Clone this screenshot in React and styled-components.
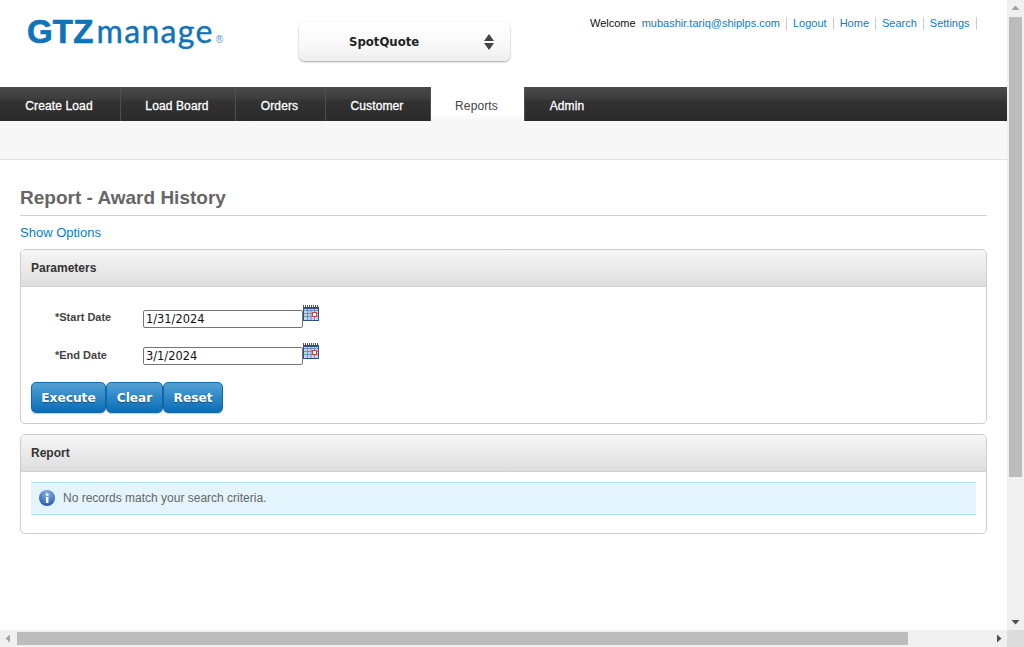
import React from "react";
import styled, { createGlobalStyle } from "styled-components";

const Global = createGlobalStyle`
  html, body { margin: 0; padding: 0; height: 100%; overflow: hidden; background: #fff; }
  * { box-sizing: border-box; }
  body { font-family: "Liberation Sans", Arial, sans-serif; }
`;

const Frame = styled.div`
  display: grid;
  grid-template-columns: 1007px 17px;
  grid-template-rows: 630px 17px;
  width: 1024px;
  height: 647px;
`;
const Viewport = styled.div`
  overflow: hidden;
  background: #fff;
`;
const Header = styled.header`
  display: flex;
  height: 87px;
`;
const Logo = styled.div`
  display: flex;
  align-items: baseline;
  width: 299px;
  height: 87px;
  padding: 10px 0 0 27px;
  color: #0f73ba;
  white-space: nowrap;
`;
const LogoMark = styled.span`
  font-size: 33px;
  font-weight: 700;
  font-family: "Liberation Sans", Arial, sans-serif;
  -webkit-text-stroke: 0.7px #0f73ba;
  letter-spacing: 0.2px;
  line-height: 42px;
`;
const LogoWord = styled.span`
  margin-left: 3px;
  font-size: 32px;
  font-family: "Lato", sans-serif;
  font-weight: 400;
  -webkit-text-stroke: 0.4px #0f73ba;
  letter-spacing: 1.3px;
  line-height: 42px;
`;
const LogoReg = styled.span`
  margin-left: 2px;
  font-size: 10px;
  opacity: 0.75;
`;
const ModuleSelect = styled.div`
  display: flex;
  align-items: center;
  justify-content: space-between;
  width: 211px;
  height: 39px;
  margin-top: 22px;
  padding: 0 16px 0 50px;
  border-radius: 6px;
  background: linear-gradient(#ffffff, #f8f8f8 60%, #eeeeee);
  box-shadow: 0 1px 2px rgba(0, 0, 0, 0.35), 0 0 1px rgba(0, 0, 0, 0.12);
  font-family: "DejaVu Sans", Verdana, sans-serif;
  font-weight: 700;
  color: #222;
`;
const ModuleName = styled.span`
  margin-top: 1px;
  font-size: 11.7px;
`;
const UserBar = styled.div`
  display: flex;
  align-items: center;
  height: 14px;
  margin: 16px 0 0 80px;
  font-size: 11px;
  white-space: nowrap;
`;
const Welcome = styled.span`
  margin-right: 6px;
  color: #111;
`;
const TopLink = styled.a`
  display: block;
  height: 13px;
  line-height: 13px;
  padding: 0 6px;
  border-right: 1px solid #ccc;
  color: #0a7dca;
  &:first-of-type { padding-left: 0; }
`;
const Nav = styled.nav`
  display: flex;
  height: 34px;
  background: linear-gradient(#4a4a4a, #3c3c3c 35%, #333333 40%, #2a2a2a);
`;
const Tab = styled.div`
  display: flex;
  align-items: center;
  justify-content: center;
  width: ${(p) => p.$w}px;
  padding: 4px 2px 0 0;
  border-right: 1px solid #4f4f4f;
  font-size: 12px;
  letter-spacing: 0.12px;
  -webkit-text-stroke: ${(p) => (p.$active ? "0" : "0.3px #fff")};
  color: ${(p) => (p.$active ? "#444" : "#fff")};
  background: ${(p) => (p.$active ? "linear-gradient(#ffffff, #ffffff 75%, #f6f6f6)" : "none")};
  &:last-child { border-right: 0; }
`;
const SubBar = styled.div`
  height: 39px;
  background: #f7f7f7;
  border-bottom: 1px solid #e3e3e3;
`;
const Content = styled.main`
  padding: 0 20px;
  width: 1007px;
`;
const Title = styled.h1`
  margin: 0;
  height: 56px;
  padding-top: 26px;
  border-bottom: 1px solid #cfcfcf;
  font-size: 19px;
  line-height: 24px;
  font-weight: 700;
  color: #666;
`;
const OptionsLink = styled.a`
  display: block;
  height: 33px;
  padding-top: 9px;
  font-size: 13px;
  line-height: 16px;
  color: #0a7dca;
`;
const Panel = styled.section`
  border: 1px solid #cccccc;
  border-radius: 5px;
  overflow: hidden;
  margin-bottom: 10px;
`;
const PanelHead = styled.div`
  height: 37px;
  padding: 0 10px;
  display: flex;
  align-items: center;
  background: linear-gradient(#f6f6f6, #dedede);
  border-bottom: 1px solid #d0d0d0;
  font-size: 12px;
  font-weight: 700;
  color: #333;
`;
const ParamBody = styled.div`
  height: 136px;
  padding: 17px 10px 0;
`;
const FieldRow = styled.div`
  display: flex;
  height: 38px;
  padding-left: 24px;
`;
const FieldLabel = styled.label`
  width: 88px;
  padding-top: 7px;
  font-size: 11px;
  line-height: 13px;
  font-weight: 700;
  color: #444;
`;
const DateInput = styled.div`
  width: 160px;
  height: 18px;
  margin-top: ${(p) => p.$mt}px;
  padding: 1px 2px 0;
  border: 1px solid #767676;
  border-radius: 2px;
  background: #fff;
  font-family: "DejaVu Sans", Verdana, sans-serif;
  font-size: 11.4px;
  line-height: 15px;
  color: #111;
`;
const CalendarIcon = styled.svg`
  display: block;
  width: 16px;
  height: 16px;
  margin-top: 1px;
`;
const Buttons = styled.div`
  display: flex;
  margin-top: 2px;
`;
const Button = styled.div`
  display: flex;
  align-items: center;
  justify-content: center;
  width: ${(p) => p.$w}px;
  height: 31px;
  border: 1px solid #1269a8;
  border-radius: 5px;
  background: linear-gradient(#55a1d3, #2f8ac7 45%, #0b6db7);
  box-shadow: 0 1px 1px rgba(0, 0, 0, 0.2);
  color: #fff;
  font-family: "DejaVu Sans", Verdana, sans-serif;
  font-size: 12.2px;
  font-weight: 700;
  text-shadow: 0 1px 1px rgba(0, 0, 0, 0.35);
`;
const ReportBody = styled.div`
  height: 61px;
  padding: 10px 10px 0;
`;
const Alert = styled.div`
  display: flex;
  align-items: center;
  gap: 8px;
  height: 33px;
  padding: 0 0 1px 8px;
  background: #e4f4fd;
  border-top: 1px solid #b8def0;
  border-bottom: 1px solid #b8def0;
  font-size: 12px;
  color: #666;
`;
const InfoIcon = styled.svg`
  display: block;
  width: 16px;
  height: 16px;
  flex: none;
`;
const VTrack = styled.div`
  display: flex;
  flex-direction: column;
  align-items: center;
  background: #f0f0f0;
`;
const HTrack = styled.div`
  display: flex;
  align-items: center;
  background: #f0f0f0;
`;
const Corner = styled.div`
  background: #dcdcdc;
`;
const ArrowBox = styled.svg`
  display: block;
  width: 17px;
  height: 17px;
  flex: none;
`;
const VThumb = styled.div`
  width: 13px;
  height: 460px;
  background: #bcbcbc;
`;
const TrackGap = styled.div`
  flex: 1;
`;
const HThumb = styled.div`
  width: 891px;
  height: 13px;
  background: #bcbcbc;
`;

const Calendar = () => (
  <CalendarIcon viewBox="0 0 16 16">
    <rect x="0" y="2" width="16" height="14" fill="#31507f" />
    <rect x="1" y="4" width="14" height="11" fill="#c6d6ee" />
    <path d="M0 1h16" stroke="#555" strokeDasharray="1 1" strokeWidth="2" />
    <path d="M1 5.5h14M1 8.5h14M1 11.5h14M4.5 4v11M8 4v11M11.5 4v11" stroke="#6f8fc4" strokeWidth="1" />
    <rect x="9.5" y="7.5" width="4" height="4" fill="#fff" stroke="#d9402a" strokeWidth="1" />
  </CalendarIcon>
);

const Updown = () => (
  <svg width="10" height="16" viewBox="0 0 10 16">
    <path d="M5 0 L10 7 H0 Z" fill="#444" />
    <path d="M5 16 L10 9 H0 Z" fill="#444" />
  </svg>
);

const Info = () => (
  <InfoIcon viewBox="0 0 16 16">
    <defs>
      <radialGradient id="i" cx="50%" cy="25%" r="80%">
        <stop offset="0" stopColor="#8fb4e6" />
        <stop offset="1" stopColor="#1f55ab" />
      </radialGradient>
    </defs>
    <circle cx="8" cy="8" r="8" fill="url(#i)" />
    <rect x="7" y="7" width="2.4" height="6" fill="#fff" />
    <rect x="7" y="3.5" width="2.4" height="2.2" fill="#fff" />
  </InfoIcon>
);

export default function App() {
  return (
    <>
      <Global />
      <Frame>
        <Viewport>
          <Header>
            <Logo>
              <LogoMark>GTZ</LogoMark>
              <LogoWord>manage</LogoWord>
              <LogoReg>®</LogoReg>
            </Logo>
            <ModuleSelect>
              <ModuleName>SpotQuote</ModuleName>
              <Updown />
            </ModuleSelect>
            <UserBar>
              <Welcome>Welcome</Welcome>
              <TopLink>mubashir.tariq@shiplps.com</TopLink>
              <TopLink>Logout</TopLink>
              <TopLink>Home</TopLink>
              <TopLink>Search</TopLink>
              <TopLink>Settings</TopLink>
            </UserBar>
          </Header>
          <Nav>
            <Tab $w={121}>Create Load</Tab>
            <Tab $w={115}>Load Board</Tab>
            <Tab $w={90}>Orders</Tab>
            <Tab $w={105}>Customer</Tab>
            <Tab $w={94} $active>Reports</Tab>
            <Tab $w={86}>Admin</Tab>
          </Nav>
          <SubBar />
          <Content>
            <Title>Report - Award History</Title>
            <OptionsLink>Show Options</OptionsLink>
            <Panel>
              <PanelHead>Parameters</PanelHead>
              <ParamBody>
                <FieldRow>
                  <FieldLabel>*Start Date</FieldLabel>
                  <DateInput $mt={6}>1/31/2024</DateInput>
                  <Calendar />
                </FieldRow>
                <FieldRow>
                  <FieldLabel>*End Date</FieldLabel>
                  <DateInput $mt={5}>3/1/2024</DateInput>
                  <Calendar />
                </FieldRow>
                <Buttons>
                  <Button $w={75}>Execute</Button>
                  <Button $w={57}>Clear</Button>
                  <Button $w={60}>Reset</Button>
                </Buttons>
              </ParamBody>
            </Panel>
            <Panel>
              <PanelHead>Report</PanelHead>
              <ReportBody>
                <Alert>
                  <Info />
                  No records match your search criteria.
                </Alert>
              </ReportBody>
            </Panel>
          </Content>
        </Viewport>
        <VTrack>
          <ArrowBox viewBox="0 0 17 17"><path d="M8.5 5.5 L12.5 10 H4.5 Z" fill="#a3a3a3" /></ArrowBox>
          <VThumb />
          <TrackGap />
          <ArrowBox viewBox="0 0 17 17"><path d="M8.5 11.5 L12.5 7 H4.5 Z" fill="#505050" /></ArrowBox>
        </VTrack>
        <HTrack>
          <ArrowBox viewBox="0 0 17 17"><path d="M5.5 8.5 L10 4.5 V12.5 Z" fill="#a3a3a3" /></ArrowBox>
          <HThumb />
          <TrackGap />
          <ArrowBox viewBox="0 0 17 17"><path d="M11.5 8.5 L7 4.5 V12.5 Z" fill="#505050" /></ArrowBox>
        </HTrack>
        <Corner />
      </Frame>
    </>
  );
}
